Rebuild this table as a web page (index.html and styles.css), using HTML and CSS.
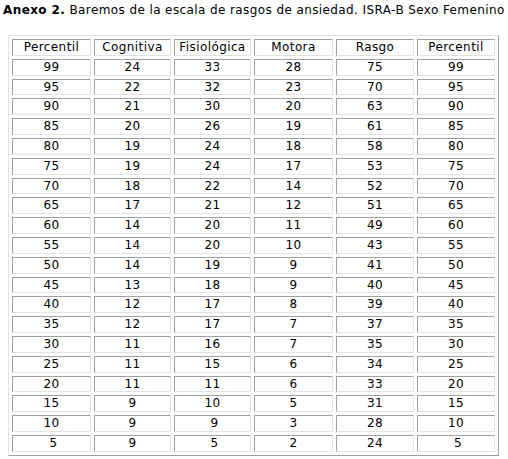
FILE: index.html
```html
<!DOCTYPE html>
<html lang="es">
<head>
<meta charset="utf-8">
<title>Anexo 2</title>
<link rel="stylesheet" href="styles.css">
</head>
<body>
<p class="title"><b>Anexo 2.</b> Baremos de la escala de rasgos de ansiedad. ISRA-B Sexo Femenino</p>
<table class="baremos">
<colgroup>
<col class="c1"><col class="c2"><col class="c3"><col class="c4"><col class="c5"><col class="c6">
</colgroup>
<tbody>
<tr><td>Percentil</td><td>Cognitiva</td><td>Fisiológica</td><td>Motora</td><td>Rasgo</td><td>Percentil</td></tr>
<tr><td>99</td><td>24</td><td>33</td><td>28</td><td>75</td><td>99</td></tr>
<tr><td>95</td><td>22</td><td>32</td><td>23</td><td>70</td><td>95</td></tr>
<tr><td>90</td><td>21</td><td>30</td><td>20</td><td>63</td><td>90</td></tr>
<tr><td>85</td><td>20</td><td>26</td><td>19</td><td>61</td><td>85</td></tr>
<tr><td>80</td><td>19</td><td>24</td><td>18</td><td>58</td><td>80</td></tr>
<tr><td>75</td><td>19</td><td>24</td><td>17</td><td>53</td><td>75</td></tr>
<tr><td>70</td><td>18</td><td>22</td><td>14</td><td>52</td><td>70</td></tr>
<tr><td>65</td><td>17</td><td>21</td><td>12</td><td>51</td><td>65</td></tr>
<tr><td>60</td><td>14</td><td>20</td><td>11</td><td>49</td><td>60</td></tr>
<tr><td>55</td><td>14</td><td>20</td><td>10</td><td>43</td><td>55</td></tr>
<tr><td>50</td><td>14</td><td>19</td><td>9</td><td>41</td><td>50</td></tr>
<tr><td>45</td><td>13</td><td>18</td><td>9</td><td>40</td><td>45</td></tr>
<tr><td>40</td><td>12</td><td>17</td><td>8</td><td>39</td><td>40</td></tr>
<tr><td>35</td><td>12</td><td>17</td><td>7</td><td>37</td><td>35</td></tr>
<tr><td>30</td><td>11</td><td>16</td><td>7</td><td>35</td><td>30</td></tr>
<tr><td>25</td><td>11</td><td>15</td><td>6</td><td>34</td><td>25</td></tr>
<tr><td>20</td><td>11</td><td>11</td><td>6</td><td>33</td><td>20</td></tr>
<tr><td>15</td><td>9</td><td>10</td><td>5</td><td>31</td><td>15</td></tr>
<tr><td>10</td><td>9</td><td>&nbsp;9</td><td>3</td><td>28</td><td>10</td></tr>
<tr><td>&nbsp;5</td><td>9</td><td>&nbsp;5</td><td>2</td><td>24</td><td>&nbsp;5</td></tr>
</tbody>
</table>
</body>
</html>
```

FILE: styles.css
```css
html, body {
  margin: 0;
  padding: 0;
  background: #ffffff;
}

body {
  font-family: "DejaVu Sans", Verdana, sans-serif;
  font-size: 12px;
  letter-spacing: 0.4px;
  color: #000000;
}

.title {
  margin: 3px 0 0 3px;
  line-height: 15px;
  white-space: nowrap;
}

.baremos {
  margin: 17px 0 0 8px;
  width: 491px;
  table-layout: fixed;
  border-collapse: separate;
  border-spacing: 3px;
  border-style: solid;
  border-width: 1px;
  border-color: #e3e3e3 #a0a0a0 #a0a0a0 #e3e3e3;
}

.c1 { width: 79px; }
.c2 { width: 77px; }
.c3 { width: 77px; }
.c4 { width: 79px; }
.c5 { width: 78px; }
.c6 { width: 78px; }

.baremos td {
  padding: 0;
  text-align: center;
  line-height: 14.8px;
  border-style: solid;
  border-width: 1px;
  border-color: #a0a0a0 #e3e3e3 #e3e3e3 #a0a0a0;
  white-space: nowrap;
}
```
